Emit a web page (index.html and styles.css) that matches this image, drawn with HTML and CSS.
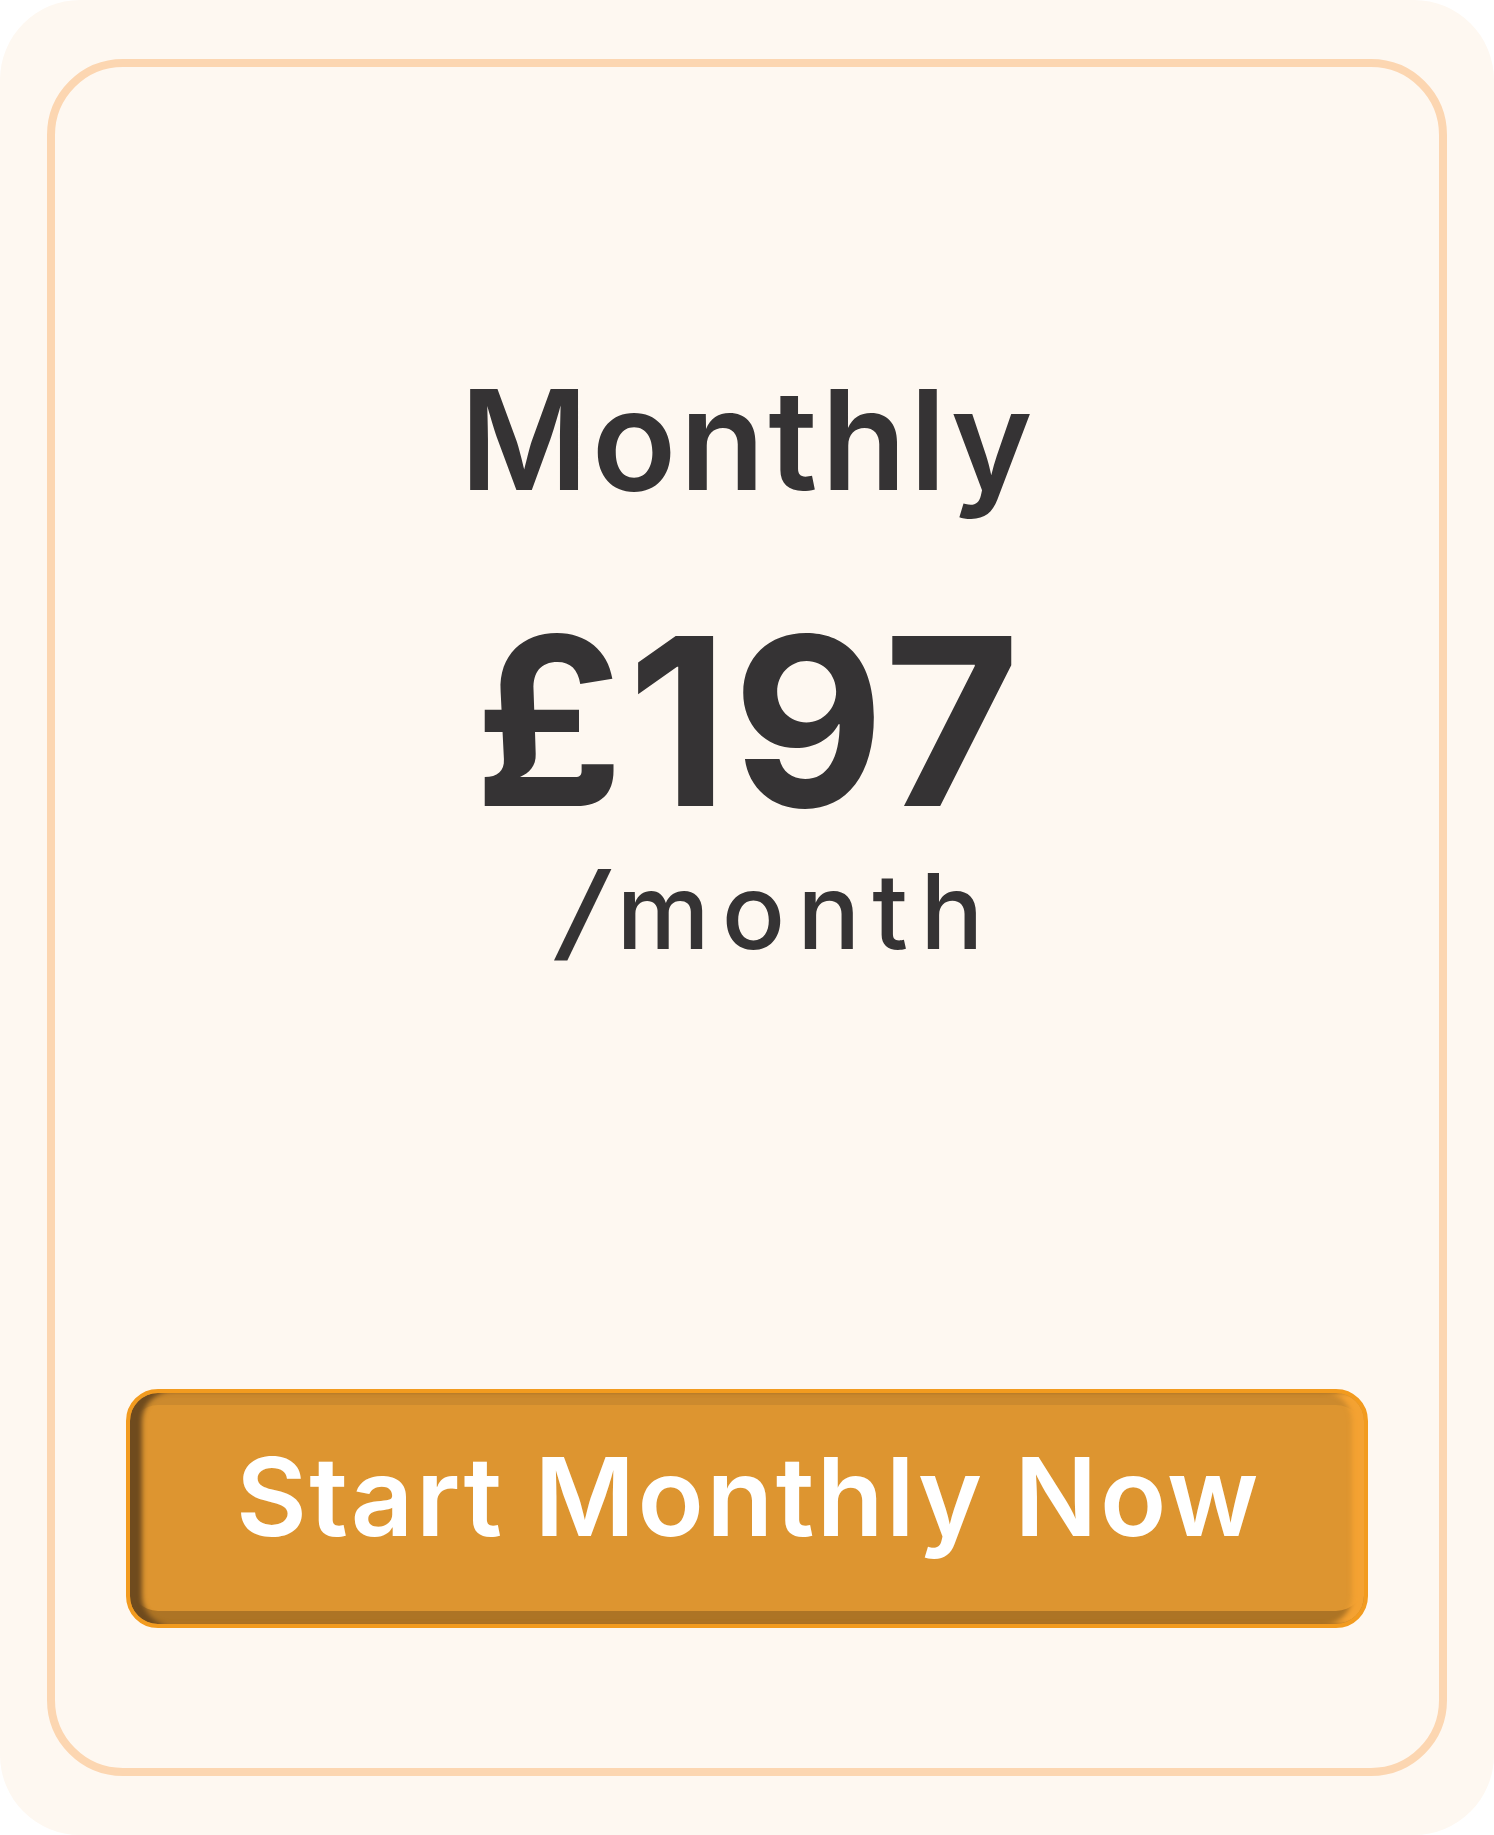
FILE: index.html
```
<!DOCTYPE html>
<html lang="en">
<head>
<meta charset="utf-8">
<title>Monthly plan</title>
<link rel="stylesheet" href="styles.css">
</head>
<body>
<div class="card">
  <div class="plan">
    <h2 class="plan-name">Monthly</h2>
    <div class="price">£197</div>
    <div class="period"><span class="slash">/</span>month</div>
    <a class="cta" href="#">Start Monthly Now</a>
  </div>
</div>
</body>
</html>
```
FILE: styles.css
```
html, body {
  margin: 0;
  padding: 0;
  background: #ffffff;
}

body {
  width: 1494px;
  font-family: Inter, "Noto Sans", "Liberation Sans", sans-serif;
  color: #353334;
}

.card {
  box-sizing: border-box;
  width: 1494px;
  height: 1835px;
  padding: 59px 47px;
  background: #fef8f1;
  border-radius: 80px;
  display: flex;
}

.plan {
  flex: 1;
  box-sizing: border-box;
  border: 8px solid #fcd6b1;
  border-radius: 76px;
  padding: 303px 71px 140px;
  display: flex;
  flex-direction: column;
  align-items: center;
}

.plan-name {
  margin: 0;
  padding-left: 2px;
  font-size: 139px;
  line-height: 1;
  font-weight: 600;
  letter-spacing: 3.5px;
}

.price {
  margin-top: 95px;
  padding-left: 4px;
  font-size: 234px;
  line-height: 1;
  font-weight: 700;
  letter-spacing: 4px;
}

.period {
  margin-top: 23px;
  padding-left: 64px;
  font-size: 105px;
  line-height: 0.96;
  font-weight: 500;
  letter-spacing: 12px;
}

.slash {
  display: inline-block;
  margin-right: 1px;
  font-weight: 700;
  transform: skewX(-12deg);
}

.cta {
  margin-top: auto;
  align-self: stretch;
  box-sizing: border-box;
  height: 239px;
  padding-top: 49px;
  padding-left: 3px;
  border: 4px solid #f29b1f;
  border-radius: 32px;
  background: #dd9530;
  box-shadow:
    inset 13px 0 5px -1px #6f4b1e,
    inset -13px 0 5px -1px #f4a232,
    inset 0 12px 0 #cc8a2e,
    inset 0 -13px 0 #ad7425;
  color: #ffffff;
  text-decoration: none;
  text-align: center;
  font-size: 109px;
  line-height: 1;
  font-weight: 600;
  letter-spacing: 2.5px;
}
```
